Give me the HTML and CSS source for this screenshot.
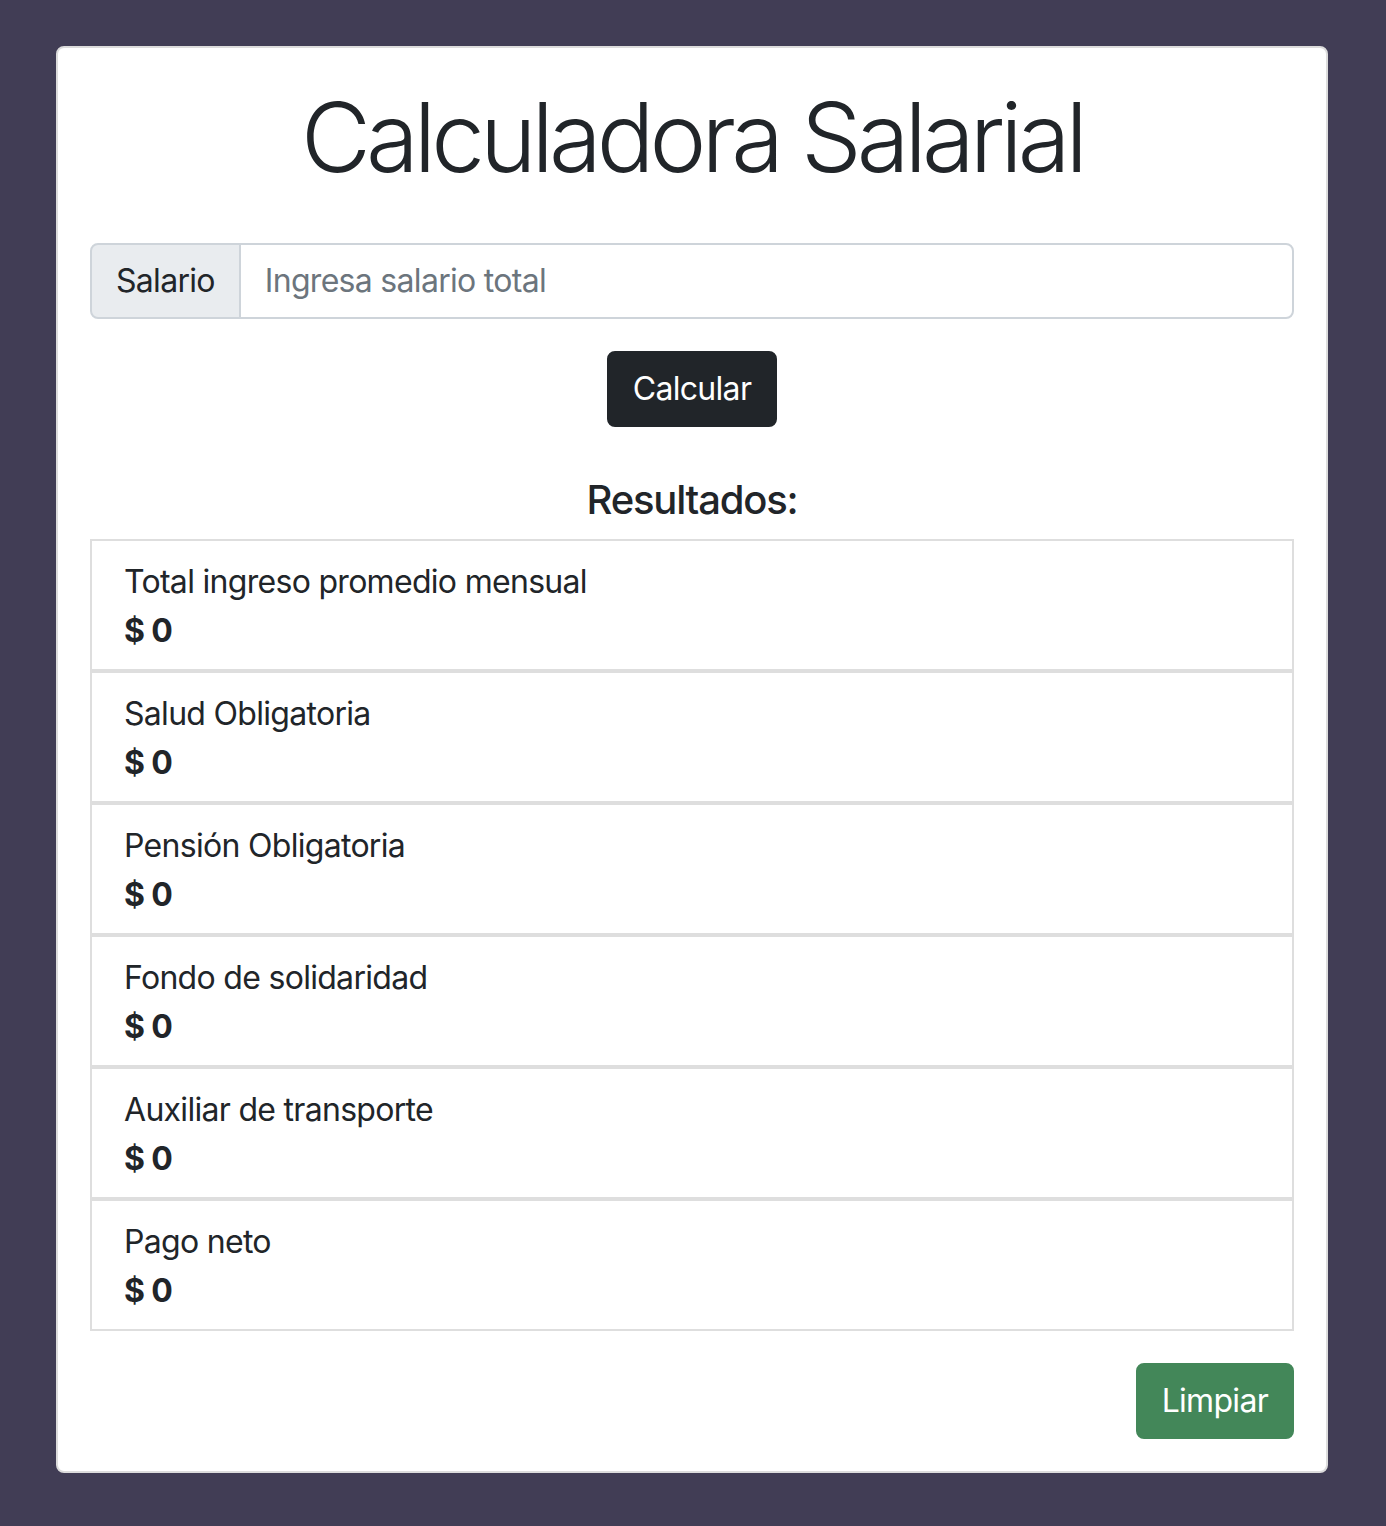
FILE: index.html
```html
<!DOCTYPE html>
<html lang="es">
<head>
<meta charset="utf-8">
<title>Calculadora Salarial</title>
<link rel="stylesheet" href="styles.css">
</head>
<body>
<main class="page">
  <section class="card">
    <h1 class="title">Calculadora Salarial</h1>
    <div class="input-group">
      <span class="addon">Salario</span>
      <input class="field" type="text" placeholder="Ingresa salario total">
    </div>
    <div class="center">
      <button class="btn btn-dark" type="button">Calcular</button>
    </div>
    <h5 class="results-title">Resultados:</h5>
    <ul class="list">
      <li class="item"><div class="label">Total ingreso promedio mensual</div><div class="value">$ 0</div></li>
      <li class="item"><div class="label">Salud Obligatoria</div><div class="value">$ 0</div></li>
      <li class="item"><div class="label">Pensión Obligatoria</div><div class="value">$ 0</div></li>
      <li class="item"><div class="label">Fondo de solidaridad</div><div class="value">$ 0</div></li>
      <li class="item"><div class="label">Auxiliar de transporte</div><div class="value">$ 0</div></li>
      <li class="item"><div class="label">Pago neto</div><div class="value">$ 0</div></li>
    </ul>
    <div class="end">
      <button class="btn btn-success" type="button">Limpiar</button>
    </div>
  </section>
</main>
</body>
</html>
```

FILE: styles.css
```css
* { box-sizing: border-box; }
html, body { margin: 0; padding: 0; }
body {
  background: #413d55;
  font-family: Inter, "Noto Sans", "Liberation Sans", sans-serif;
  color: #212529;
  font-size: 32px;
  line-height: 1.5;
  letter-spacing: -0.7px;
}
.page {
  padding: 46px 0 54px 56px;
}
.card {
  width: 1272px;
  background: #fff;
  border: 2px solid #dcdcdc;
  border-radius: 8px;
  padding: 32px;
}
.title {
  margin: 0 0 48px;
  font-size: 96px;
  font-weight: 300;
  line-height: 1.2;
  text-align: center;
  letter-spacing: -4.95px;
}
.input-group {
  display: flex;
  height: 76px;
}
.addon {
  display: flex;
  align-items: center;
  padding: 0 24px;
  background: #e9ecef;
  border: 2px solid #ced4da;
  border-radius: 8px 0 0 8px;
  color: #212529;
}
.field {
  flex: 1;
  min-width: 0;
  margin-left: -2px;
  border: 2px solid #ced4da;
  border-radius: 0 8px 8px 0;
  padding: 0 24px;
  font: inherit;
  letter-spacing: inherit;
  color: #212529;
  outline: none;
}
.field::placeholder { color: #6c757d; }
.center {
  display: flex;
  justify-content: center;
  margin-top: 32px;
}
.btn {
  font: inherit;
  letter-spacing: inherit;
  height: 76px;
  padding: 0 24px;
  border: 2px solid transparent;
  border-radius: 8px;
  color: #fff;
  cursor: pointer;
}
.btn-dark { background: #212529; border-color: #212529; }
.btn-success { background: #438759; border-color: #438759; }
.results-title {
  margin: 49px 0 15px;
  font-size: 40px;
  font-weight: 500;
  line-height: 1.2;
  text-align: center;
  letter-spacing: -1.2px;
}
.list {
  list-style: none;
  margin: 0;
  padding: 0;
}
.item {
  border: 2px solid #dedede;
  padding: 16px 32px;
}
.label { line-height: 48px; padding-top: 1px; margin-bottom: -1px; }
.value { line-height: 48px; font-weight: 700; padding-top: 2px; margin-bottom: -2px; }
.end {
  display: flex;
  justify-content: flex-end;
  margin-top: 32px;
}
```
